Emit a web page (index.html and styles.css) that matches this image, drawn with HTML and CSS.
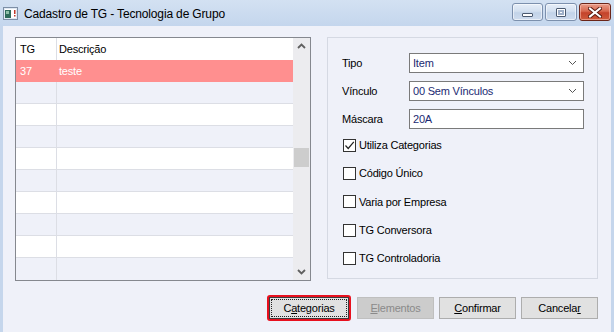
FILE: index.html
```html
<!DOCTYPE html>
<html lang="pt">
<head>
<meta charset="utf-8">
<title>Cadastro de TG</title>
<link rel="stylesheet" href="styles.css">
</head>
<body>
<div class="window">
  <div class="titlebar">
    <svg class="appicon" width="15" height="13" viewBox="0 0 15 13">
      <rect x="0.5" y="0.5" width="14" height="12" fill="#dfe8f2" stroke="#7d8fa6"/>
      <rect x="2" y="2" width="11" height="9" fill="#ffffff"/>
      <rect x="2" y="3" width="6" height="8" fill="#2f6b5a"/>
      <rect x="3" y="4" width="3" height="3" fill="#8fc0a8"/>
      <rect x="11" y="3" width="1.5" height="4" fill="#c0392b"/>
      <rect x="11" y="8" width="1.5" height="1.5" fill="#c0392b"/>
    </svg>
    <span class="title">Cadastro de TG - Tecnologia de Grupo</span>
    <div class="winbtns">
      <div class="wb min"><span class="minbar"></span></div>
      <div class="wb max"><span class="maxbox"></span></div>
      <div class="wb close">
        <svg width="14" height="11" viewBox="0 0 14 11">
          <path d="M2 1.5 L12 9.5 M12 1.5 L2 9.5" stroke="#5a1a10" stroke-width="4" stroke-linecap="square"/>
          <path d="M2 1.5 L12 9.5 M12 1.5 L2 9.5" stroke="#ffffff" stroke-width="2" stroke-linecap="square"/>
        </svg>
      </div>
    </div>
  </div>

  <div class="client">
    <div class="main">
      <div class="grid">
        <div class="rows">
          <div class="row head"><div class="c1">TG</div><div class="c2">Descrição</div></div>
          <div class="row sel"><div class="c1">37</div><div class="c2">teste</div></div>
          <div class="row alt"><div class="c1"></div><div class="c2"></div></div>
          <div class="row"><div class="c1"></div><div class="c2"></div></div>
          <div class="row alt"><div class="c1"></div><div class="c2"></div></div>
          <div class="row"><div class="c1"></div><div class="c2"></div></div>
          <div class="row alt"><div class="c1"></div><div class="c2"></div></div>
          <div class="row"><div class="c1"></div><div class="c2"></div></div>
          <div class="row alt"><div class="c1"></div><div class="c2"></div></div>
          <div class="row"><div class="c1"></div><div class="c2"></div></div>
          <div class="row alt last"><div class="c1"></div><div class="c2"></div></div>
        </div>
        <div class="vscroll">
          <svg class="arrow" width="17" height="16" viewBox="0 0 17 16"><path d="M5 10 L8.5 6.5 L12 10" fill="none" stroke="#606060" stroke-width="1.8"/></svg>
          <div class="track"><div class="thumb"></div></div>
          <svg class="arrow" width="17" height="16" viewBox="0 0 17 16"><path d="M5 6 L8.5 9.5 L12 6" fill="none" stroke="#606060" stroke-width="1.8"/></svg>
        </div>
      </div>

      <div class="group">
        <div class="field">
          <span class="lbl">Tipo</span>
          <div class="combo"><span>Item</span>
            <svg width="9" height="6" viewBox="0 0 9 6"><path d="M1 1 L4.5 4.5 L8 1" fill="none" stroke="#555" stroke-width="1"/></svg>
          </div>
        </div>
        <div class="field">
          <span class="lbl">Vínculo</span>
          <div class="combo"><span>00 Sem Vínculos</span>
            <svg width="9" height="6" viewBox="0 0 9 6"><path d="M1 1 L4.5 4.5 L8 1" fill="none" stroke="#555" stroke-width="1"/></svg>
          </div>
        </div>
        <div class="field">
          <span class="lbl">Máscara</span>
          <div class="edit"><span>20A</span></div>
        </div>
        <div class="checks">
          <div class="chk"><span class="box checked"><svg width="11" height="11" viewBox="0 0 11 11"><path d="M1.5 5.5 L4.2 8.5 L9.8 1.8" fill="none" stroke="#222" stroke-width="1.2"/></svg></span><span>Utiliza Categorias</span></div>
          <div class="chk"><span class="box"></span><span>Código Único</span></div>
          <div class="chk"><span class="box"></span><span>Varia por Empresa</span></div>
          <div class="chk"><span class="box"></span><span>TG Conversora</span></div>
          <div class="chk"><span class="box"></span><span>TG Controladoria</span></div>
        </div>
      </div>
    </div>

    <div class="buttons">
      <div class="focusring"><div class="btn focused"><span class="focusdots">C<u>a</u>tegorias</span></div></div>
      <div class="btn disabled"><span><u>E</u>lementos</span></div>
      <div class="btn"><span><u>C</u>onfirmar</span></div>
      <div class="btn"><span>Cancela<u>r</u></span></div>
    </div>
  </div>
</div>
</body>
</html>
```

FILE: styles.css
```css
* { box-sizing: border-box; }
html, body { margin: 0; padding: 0; }
body {
  font-family: "Liberation Sans", Arial, sans-serif;
  font-size: 11px;
  color: #000;
  background: #eff1f9;
}
.window {
  width: 614px;
  height: 332px;
  display: flex;
  flex-direction: column;
  overflow: hidden;
}
.titlebar {
  height: 26px;
  flex: none;
  display: flex;
  align-items: center;
  background: linear-gradient(#d3e1f2, #c4d6ed);
  padding-left: 3px;
}
.appicon { flex: none; }
.title {
  margin-left: 6px;
  font-size: 12px;
  letter-spacing: -0.15px;
  color: #000;
  padding-top: 1px;
}
.winbtns {
  margin-left: auto;
  margin-right: 3px;
  align-self: flex-start;
  margin-top: 3px;
  display: flex;
  gap: 2px;
}
.wb {
  height: 18px;
  width: 31px;
  border-radius: 3px;
  border: 1px solid #7c90ad;
  background: linear-gradient(#e6eef8 0%, #d3e0f0 45%, #c2d3e8 55%, #cfdcee 100%);
  display: flex;
  align-items: center;
  justify-content: center;
  box-shadow: inset 0 0 0 1px rgba(255,255,255,0.55);
}
.wb.max { width: 32px; }
.wb.close {
  width: 32px;
  border-color: #6b2518;
  background: linear-gradient(#e89c88 0%, #d7684f 45%, #c4432b 55%, #cf5a3c 100%);
  box-shadow: inset 0 0 0 1px rgba(255,210,200,0.5);
}
.minbar {
  width: 11px;
  height: 4px;
  margin-top: 5px;
  background: #fff;
  border: 1px solid #4b5a70;
  border-radius: 1px;
}
.maxbox {
  width: 10px;
  height: 9px;
  border: 1px solid #4b5a70;
  background: #fff;
  box-shadow: inset 0 0 0 1px #fff, inset 0 0 0 3px #9fb0c8;
  border-radius: 1px;
}
.client {
  flex: 1;
  display: flex;
  flex-direction: column;
  border-left: 3px solid #c5d6ec;
  border-right: 3px solid #c5d6ec;
  padding: 11px 13px 0 12px;
  background: #eff1f9;
}
.main {
  display: flex;
  align-items: flex-start;
}
.grid {
  width: 296px;
  height: 244px;
  border: 1px solid #85888f;
  display: flex;
  background: #fff;
}
.rows {
  width: 277px;
  display: flex;
  flex-direction: column;
}
.row {
  height: 22px;
  display: flex;
  border-bottom: 1px solid #dcdee5;
  background: #fff;
}
.row.head { border-bottom: none; }
.row.alt { background: #eff1f9; }
.row.last { border-bottom: none; }
.row.sel { background: #ff8f8f; color: #fff; border-bottom: none; }
.c1 {
  width: 41px;
  border-right: 1px solid #dcdee5;
  padding-left: 4px;
  display: flex;
  align-items: center;
  letter-spacing: -0.2px;
}
.row.sel .c1 { border-right-color: #ff8f8f; }
.c2 {
  flex: 1;
  padding-left: 2px;
  display: flex;
  align-items: center;
  letter-spacing: -0.2px;
}
.vscroll {
  width: 17px;
  background: #ececef;
  display: flex;
  flex-direction: column;
}
.arrow { flex: none; display: block; }
.track {
  flex: 1;
  padding: 94px 1px 0 1px;
}
.thumb {
  height: 19px;
  background: #cdcdcd;
}
.group {
  margin-left: 16px;
  width: 273px;
  height: 242px;
  border: 1px solid #d5d9e3;
  padding: 15px 0 0 14px;
  display: flex;
  flex-direction: column;
  gap: 8px;
}
.field {
  display: flex;
  align-items: center;
  height: 20px;
}
.lbl {
  width: 67px;
  letter-spacing: -0.2px;
}
.combo, .edit {
  width: 175px;
  height: 20px;
  border: 1px solid #7a7a7a;
  background: #fff;
  display: flex;
  align-items: center;
  padding-left: 3px;
  padding-right: 6px;
  color: #1b2a72;
  letter-spacing: -0.2px;
}
.combo svg { margin-left: auto; }
.checks {
  display: flex;
  flex-direction: column;
  margin-top: -6px;
}
.chk {
  height: 28.3px;
  display: flex;
  align-items: center;
  letter-spacing: -0.2px;
}
.box {
  width: 13px;
  height: 13px;
  border: 1px solid #333;
  background: #fff;
  margin-left: 1px;
  margin-right: 3px;
  display: flex;
  align-items: center;
  justify-content: center;
}
.buttons {
  margin-top: 14px;
  display: flex;
  justify-content: flex-end;
  align-items: center;
  gap: 5px;
}
.focusring {
  border: 2px solid #e8101e;
  border-radius: 3px;
  margin-right: 1px;
}
.btn {
  width: 77px;
  height: 22px;
  border: 1px solid #adadad;
  background: #e1e1e1;
  display: flex;
  align-items: center;
  justify-content: center;
  letter-spacing: -0.2px;
}
.btn.focused {
  width: 80px;
  border-color: #3c3c3c;
  padding: 2px;
}
.focusdots {
  width: 100%;
  height: 100%;
  outline: 1px dotted #222;
  display: flex;
  align-items: center;
  justify-content: center;
}
.btn.disabled {
  background: #cccccc;
  border-color: #bfbfbf;
  color: #8a8a8a;
}
u { text-decoration: underline; text-underline-offset: 1px; }
```
